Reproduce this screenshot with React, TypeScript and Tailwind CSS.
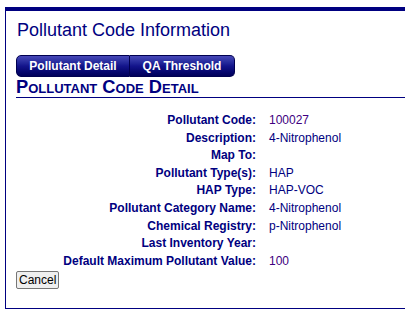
import React from 'react';

const rows: { label: string; value: string; num?: boolean }[] = [
  { label: 'Pollutant Code:', value: '100027', num: true },
  { label: 'Description:', value: '4-Nitrophenol' },
  { label: 'Map To:', value: '' },
  { label: 'Pollutant Type(s):', value: 'HAP' },
  { label: 'HAP Type:', value: 'HAP-VOC' },
  { label: 'Pollutant Category Name:', value: '4-Nitrophenol' },
  { label: 'Chemical Registry:', value: 'p-Nitrophenol' },
  { label: 'Last Inventory Year:', value: '' },
  { label: 'Default Maximum Pollutant Value:', value: '100', num: true },
];

const App = () => {
  return (
    <div className="w-[405px] h-[322px] bg-white pt-[7px] pl-[5px] font-['Liberation_Sans',Arial,sans-serif] overflow-hidden">
      <div className="border-t-4 border-l border-b border-[#000080] pl-[10px] pb-[19px]">
        {/* Title */}
        <h1 className="pt-[9px] text-[18px] leading-[21px] text-[#000080] pl-[1px]">
          Pollutant Code Information
        </h1>

        {/* Tabs */}
        <div className="mt-[14px] flex h-[22px] w-[219px]">
          <div className="flex items-center justify-center w-[114px] rounded-l-[5px] border border-[#000050] bg-gradient-to-b from-[#4848b8] via-[#14148c] to-[#00005a] text-white text-[12px] font-bold">
            Pollutant Detail
          </div>
          <div className="flex items-center justify-center w-[105px] rounded-r-[5px] border border-l-0 border-[#000050] bg-gradient-to-b from-[#4848b8] via-[#14148c] to-[#00005a] text-white text-[12px] font-bold">
            QA Threshold
          </div>
        </div>

        {/* Section header */}
        <h2 className="border-b border-[#000080] text-[18.3px] leading-[20px] font-bold text-[#000080] [font-variant:small-caps]">
          Pollutant Code Detail
        </h2>

        {/* Details */}
        <div className="mt-[14px] grid grid-cols-[240px_1fr] gap-x-[13px] text-[12px]">
          {rows.map((r) => (
            <React.Fragment key={r.label}>
              <div className="h-[17.6px] leading-[17.6px] text-right font-bold text-[#000080]">{r.label}</div>
              <div className={`h-[17.6px] leading-[17.6px] ${r.num ? 'text-[#400080]' : 'text-[#000080]'}`}>{r.value}</div>
            </React.Fragment>
          ))}
        </div>

        <button className="block mt-[1px] h-[18px] px-[2px] text-[12px] leading-[14px] text-black bg-[#efefef] border border-[#767676] rounded-[2px]">
          Cancel
        </button>
      </div>
    </div>
  );
};

export default App;
